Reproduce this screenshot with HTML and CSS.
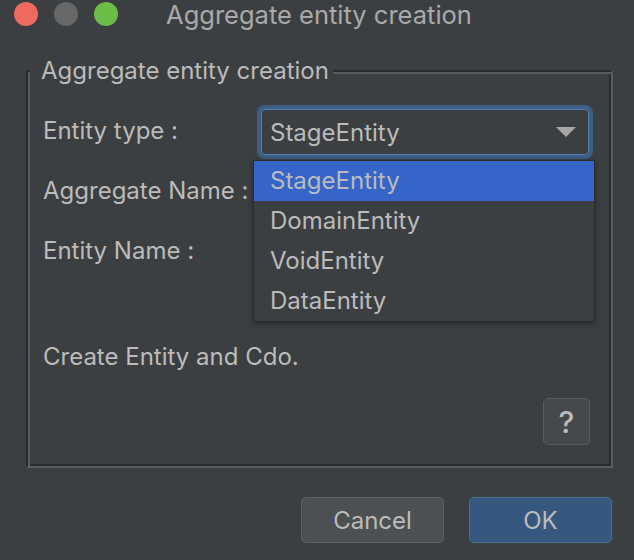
FILE: index.html
```html
<!DOCTYPE html>
<html>
<head>
<meta charset="utf-8">
<link rel="stylesheet" href="styles.css">
</head>
<body>
<div class="window">
  <div class="titlebar">
    <div class="lights">
      <span class="light red"></span>
      <span class="light gray"></span>
      <span class="light green"></span>
    </div>
    <div class="title">Aggregate entity creation</div>
    <div></div>
  </div>

  <fieldset class="group">
    <legend class="legend">Aggregate entity creation</legend>
    <div class="form">
      <div class="label">Entity type :</div>
      <div class="field">
        <div class="combo">
          <span class="combo-text">StageEntity</span>
          <span class="arrow"></span>
        </div>
        <ul class="popup">
          <li class="item selected">StageEntity</li>
          <li class="item">DomainEntity</li>
          <li class="item">VoidEntity</li>
          <li class="item">DataEntity</li>
        </ul>
      </div>
      <div class="label">Aggregate Name :</div>
      <div class="field"><div class="input"></div></div>
      <div class="label">Entity Name :</div>
      <div class="field"><div class="input"></div></div>
    </div>
    <div class="desc">Create Entity and Cdo.</div>
    <div class="help-row">
      <button class="btn help">?</button>
    </div>
  </fieldset>

  <div class="footer">
    <button class="btn cancel">Cancel</button>
    <button class="btn ok">OK</button>
  </div>
</div>
</body>
</html>
```

FILE: styles.css
```css
html, body {
  margin: 0;
  padding: 0;
  background: #3c3f41;
}
body {
  width: 634px;
  height: 560px;
  overflow: hidden;
  font-family: "Inter", "Liberation Sans", sans-serif;
  color: #bbbbbb;
}
.window {
  display: flex;
  flex-direction: column;
}
.titlebar {
  height: 30px;
  display: grid;
  grid-template-columns: 1fr auto 1fr;
  align-items: center;
}
.lights {
  display: flex;
  gap: 16px;
  padding-left: 14px;
  padding-bottom: 2px;
}
.light {
  width: 24px;
  height: 24px;
  border-radius: 50%;
  display: block;
}
.red { background: #ee6a5f; }
.gray { background: #676767; }
.green { background: #6cbd48; }
.title {
  font-size: 25.5px;
  line-height: 30px;
  color: #a9a9a9;
  padding-left: 4px;
}

.group {
  margin: 27px 21px 0 26px;
  padding: 16px 21px 21px 15px;
  border: 2px solid;
  border-color: #2a2b2c #5a5c5e #5a5c5e #2a2b2c;
  box-shadow: inset 2px 2px 0 #5a5c5e, inset -2px -2px 0 #2a2b2c;
  min-width: 0;
}
.legend {
  font-size: 24px;
  line-height: 28px;
  padding: 0 4px 0 11px;
  margin-left: -13px;
  background: #3c3f41;
  color: #bbbbbb;
}
.form {
  display: grid;
  grid-template-columns: 213px 1fr;
  grid-auto-rows: 60px;
  align-items: center;
}
.label {
  font-size: 24px;
  line-height: 28px;
}
.field {
  position: relative;
  height: 44px;
}
.combo {
  height: 44px;
  margin-left: 5px;
  border: 1px solid #5381b0;
  border-radius: 4px;
  box-shadow: 0 0 0 4px #3c5f86;
  display: flex;
  align-items: center;
  justify-content: space-between;
  padding: 0 8px 0 8px;
  box-sizing: content-box;
  width: 310px;
}
.combo-text {
  font-size: 24px;
}
.arrow {
  width: 0;
  height: 0;
  border-left: 10px solid transparent;
  border-right: 10px solid transparent;
  border-top: 10px solid #a7a7a7;
  margin-right: 4px;
}
.input {
  height: 42px;
  margin-left: 5px;
  width: 322px;
  border: 1px solid #646464;
  background: #45494a;
}
.popup {
  position: absolute;
  left: -3px;
  top: 51px;
  width: 340px;
  margin: 0;
  padding: 0;
  list-style: none;
  background: #3c3f41;
  border: 1px solid #2b2b2b;
  box-shadow: 0 2px 6px rgba(0,0,0,0.35);
  z-index: 2;
}
.item {
  height: 40px;
  line-height: 40px;
  font-size: 24px;
  padding-left: 16px;
  color: #bbbbbb;
}
.item.selected {
  background: #3565c8;
}
.desc {
  font-size: 24px;
  line-height: 28px;
  margin-top: 62px;
}
.help-row {
  display: flex;
  justify-content: flex-end;
  margin-top: 27px;
}
.btn {
  font-family: "Inter", "Liberation Sans", sans-serif;
  color: #bbbbbb;
  border-radius: 5px;
  padding: 0;
  margin: 0;
}
.help {
  width: 47px;
  height: 47px;
  background: #46494b;
  border: 1px solid #5a5d5f;
  font-size: 30px;
  font-weight: 500;
}
.footer {
  display: flex;
  justify-content: flex-end;
  gap: 25px;
  margin-top: 29px;
  padding-right: 22px;
}
.cancel, .ok {
  width: 143px;
  height: 46px;
  font-size: 24px;
}
.cancel {
  background: #4c5052;
  border: 1px solid #5e6060;
}
.ok {
  background: #365880;
  border: 1px solid #4c708c;
}
```
